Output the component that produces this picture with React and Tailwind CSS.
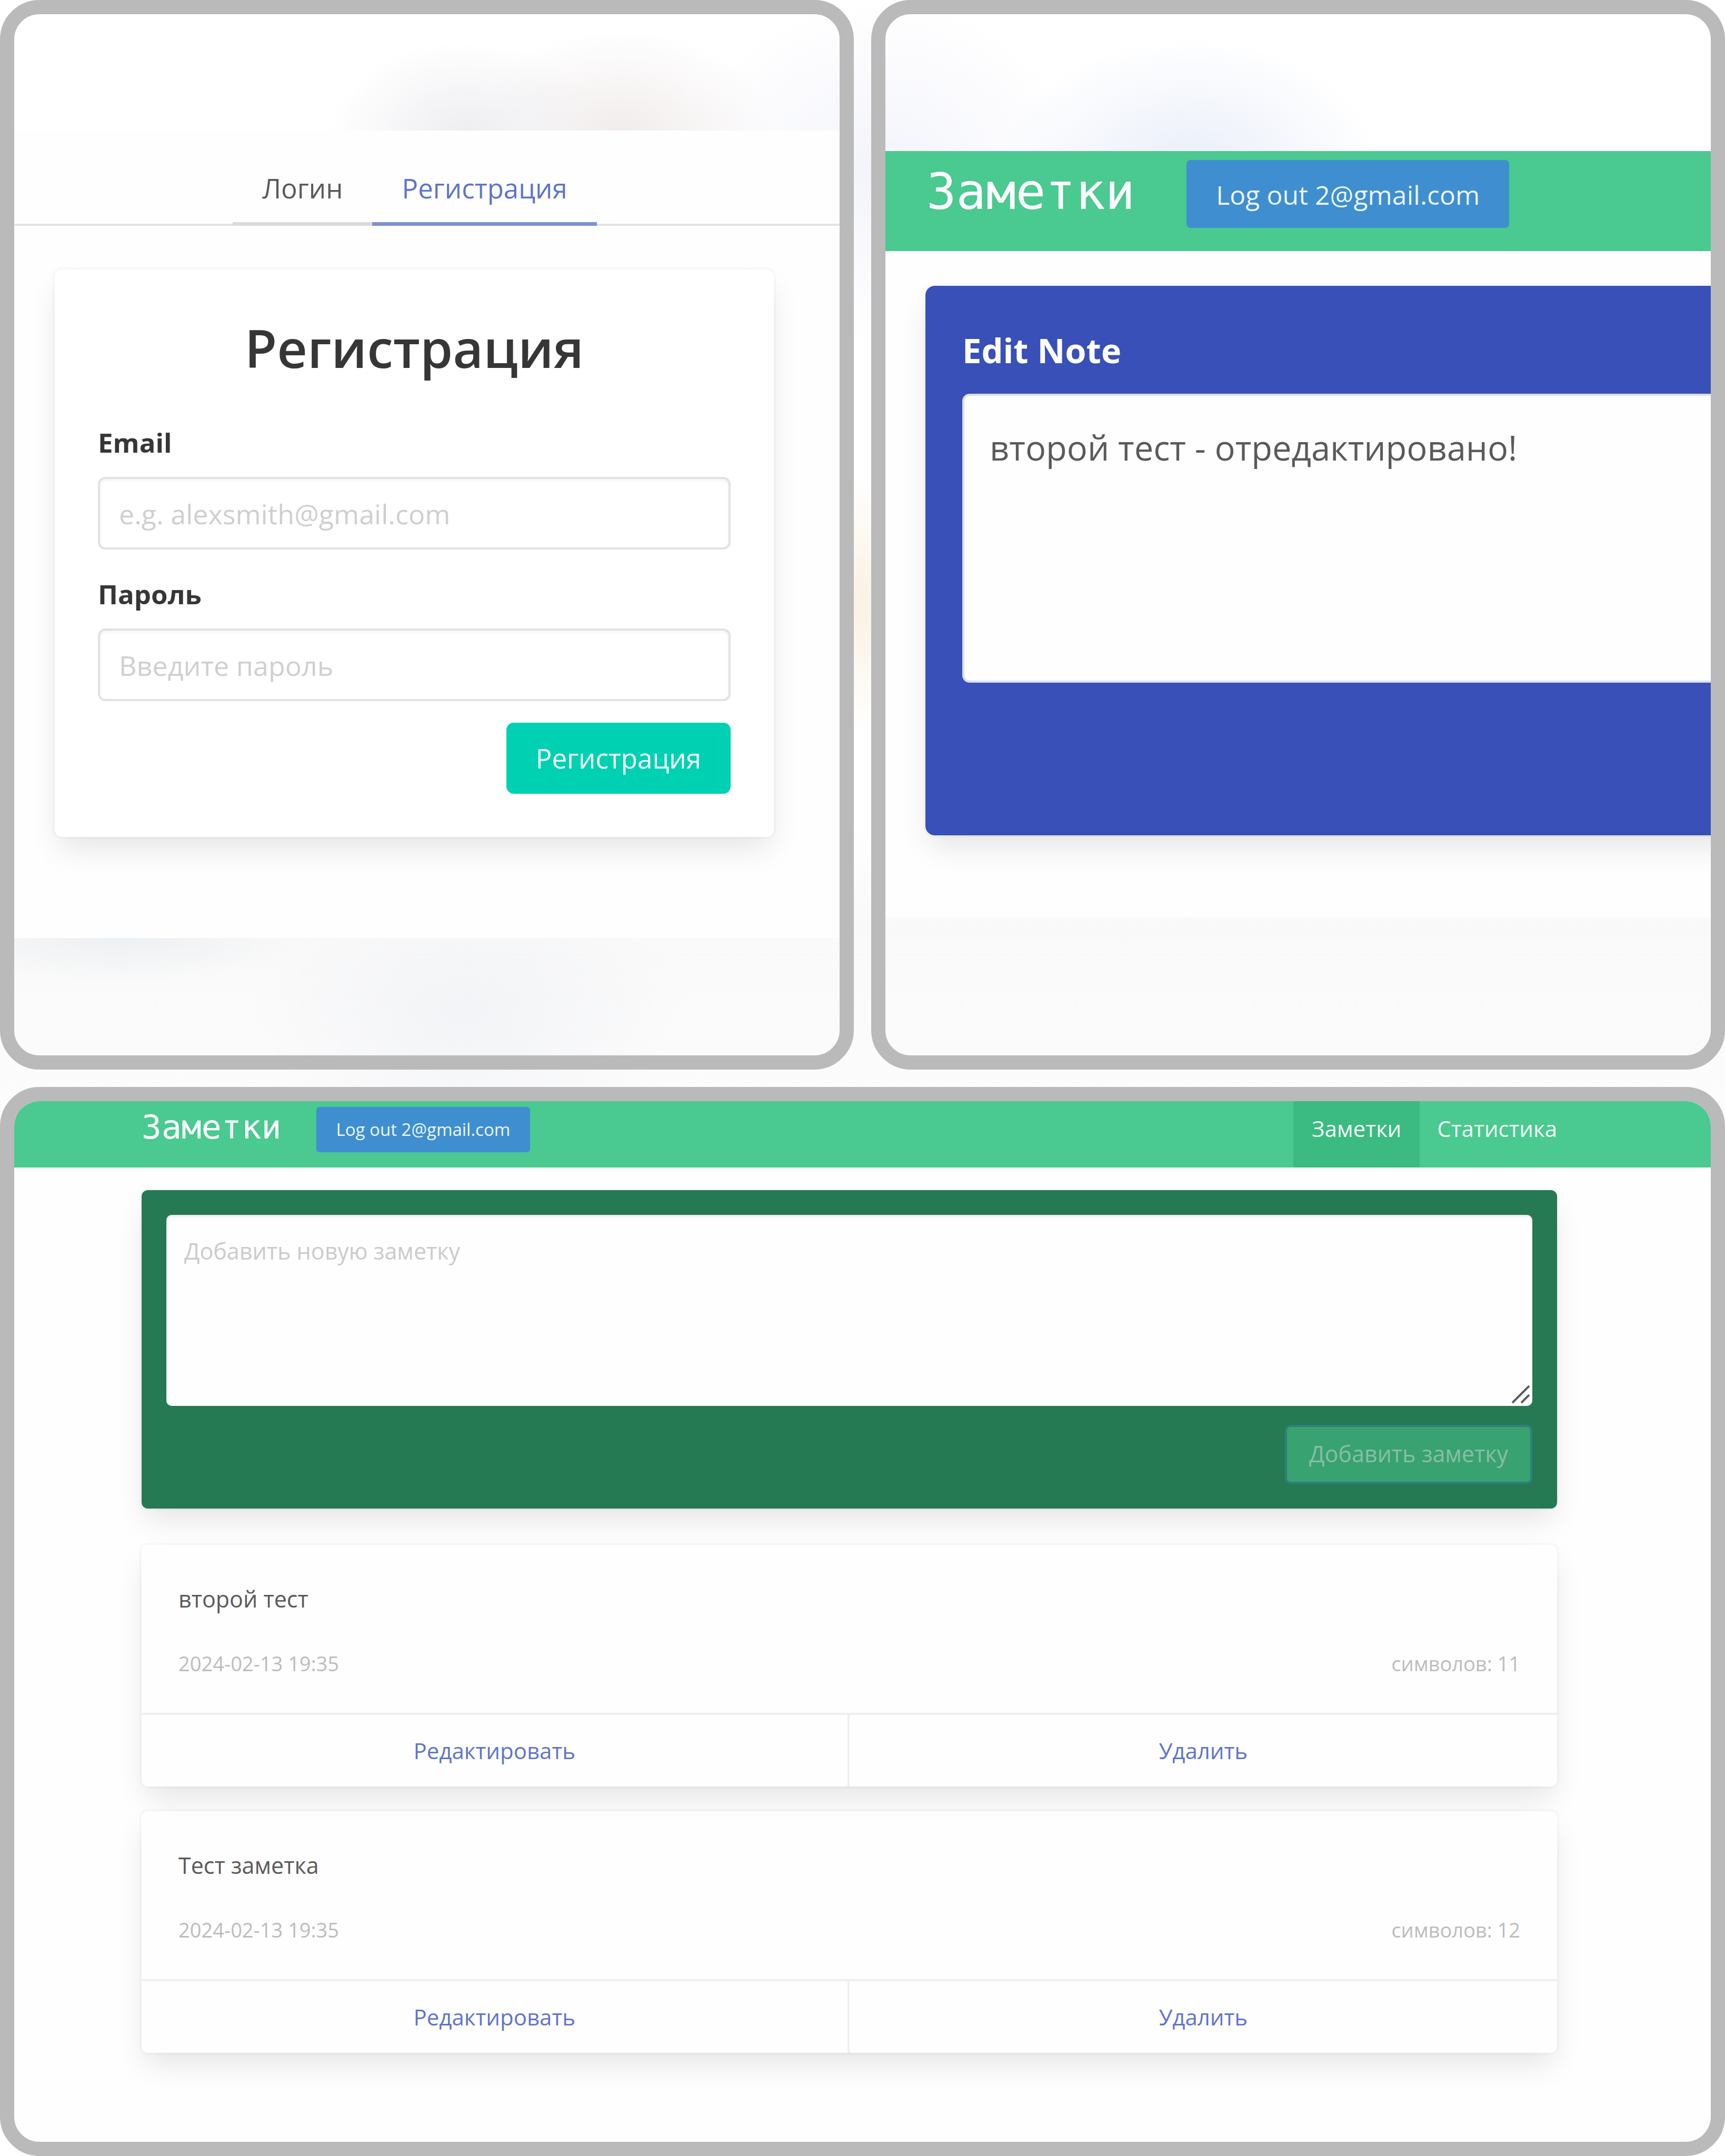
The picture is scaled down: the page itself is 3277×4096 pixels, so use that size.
const notes = [
  { id: 1, text: "второй тест", date: "2024-02-13 19:35", count: 11 },
  { id: 2, text: "Тест заметка", date: "2024-02-13 19:35", count: 12 },
];

const elevated =
  "shadow-[0_28px_56px_-7px_rgba(10,10,10,0.1),0_0_0_4px_rgba(10,10,10,0.02)]";

function Frame({ className, children }) {
  return (
    <div
      className={`flex min-w-0 flex-col overflow-hidden rounded-[75px] border-[27px] border-[#bababa] ${className}`}
    >
      {children}
    </div>
  );
}

function Field({ id, label, type, placeholder }) {
  return (
    <div className="flex flex-col">
      <label htmlFor={id} className="text-[51px] leading-[68px] font-bold text-[#363636]">
        {label}
      </label>
      <input
        id={id}
        type={type}
        placeholder={placeholder}
        className="mt-8 h-[138px] w-full rounded-[14px] border-4 border-[#e2e2e2] bg-white px-9 text-[52px] text-[#363636] shadow-[inset_0_3px_6px_rgba(10,10,10,0.05)] placeholder:text-[#cfcfcf]"
      />
    </div>
  );
}

function RegisterPanel() {
  return (
    <Frame className="pt-[221px]">
      <div className="flex grow flex-col bg-[#fefefe] pb-[188px]">
        <nav className="flex justify-center border-b-4 border-[#e4e4e4] pt-[68px] pr-[46px]">
          <a
            href="#login"
            className="-mb-1 border-b-[7px] border-[#dbdbdb] px-14 pb-6 text-[51px] leading-[82px] text-[#5a5a5a]"
          >
            Логин
          </a>
          <a
            href="#register"
            className="-mb-1 border-b-[7px] border-[#7f8fd6] px-14 pb-6 text-[51px] leading-[82px] text-[#5f74cd]"
          >
            Регистрация
          </a>
        </nav>
        <form
          className={`mt-[83px] mr-[125px] ml-[77px] flex flex-col rounded-[14px] bg-white p-[82px] ${elevated}`}
        >
          <h1 className="text-center text-[100px] leading-[132px] font-semibold text-[#363636]">
            Регистрация
          </h1>
          <div className="mt-20 flex flex-col gap-[50px]">
            <Field id="email" label="Email" type="email" placeholder="e.g. alexsmith@gmail.com" />
            <Field id="password" label="Пароль" type="password" placeholder="Введите пароль" />
          </div>
          <button
            type="button"
            className="mt-[41px] h-[135px] self-end rounded-[14px] bg-[#00d1b2] px-14 text-[51px] text-[#f2fffc]"
          >
            Регистрация
          </button>
        </form>
      </div>
      <div className="h-[223px] shrink-0" />
    </Frame>
  );
}

function EditPanel() {
  return (
    <Frame className="pt-[260px]">
      <div className="flex grow flex-col overflow-hidden bg-[#fefefe]">
        <header className="flex h-[190px] items-start gap-[98px] bg-[#4ac990] pt-[17px] pl-[78px]">
          <span className="font-['DejaVu_Sans_Mono',monospace] text-[94px] leading-[122px] text-white">
            Заметки
          </span>
          <button
            type="button"
            className="h-[129px] rounded-[8px] bg-[#3f8fd0] px-14 pt-1 text-[50px] whitespace-nowrap text-[#edf5fb]"
          >
            Log out 2@gmail.com
          </button>
        </header>
        <div
          className={`mt-[66px] -mr-20 ml-[76px] flex grow flex-col rounded-[18px] bg-[#3850b7] pt-[78px] pb-[290px] pl-[70px] ${elevated}`}
        >
          <label htmlFor="edit" className="text-[65px] leading-[88px] font-bold text-white">
            Edit Note
          </label>
          <textarea
            id="edit"
            defaultValue="второй тест - отредактировано!"
            className="mt-[39px] w-full grow resize-none rounded-[14px] border-4 border-[#dcdfef] bg-[#fefefe] px-[48px] py-[48px] text-[65px] leading-[100px] text-[#5a5a5a]"
          />
        </div>
        <div className="h-[156px] shrink-0" />
      </div>
      <div className="h-[262px] shrink-0" />
    </Frame>
  );
}

function NoteCard({ note }) {
  return (
    <article className={`flex flex-col rounded-[12px] bg-[#fefefe] ${elevated}`}>
      <div className="px-[70px] pt-[69px] pb-[60px]">
        <p className="text-[43px] leading-[68px] text-[#5a5a5a]">{note.text}</p>
        <div className="mt-[54px] flex justify-between text-[38px] leading-[68px] text-[#bcbcbc]">
          <time>{note.date}</time>
          <span>символов: {note.count}</span>
        </div>
      </div>
      <footer className="grid grid-cols-2 border-t-4 border-[#efefef] text-center text-[42px] leading-[136px] text-[#5f74cd]">
        <a href="#edit" className="border-r-4 border-[#efefef]">
          Редактировать
        </a>
        <a href="#delete">Удалить</a>
      </footer>
    </article>
  );
}

function NotesPanel() {
  return (
    <Frame className="col-span-2 bg-[#fefefe]">
      <header className="flex h-[126px] shrink-0 items-start bg-[#4ac990] pr-[259px] pl-[242px]">
        <span className="pt-[10px] font-['DejaVu_Sans_Mono',monospace] text-[63px] leading-[80px] text-white">
          Заметки
        </span>
        <button
          type="button"
          className="mt-[11px] ml-[66px] h-[86px] rounded-[6px] bg-[#3f8fd0] px-[38px] text-[33px] whitespace-nowrap text-[#edf5fb]"
        >
          Log out 2@gmail.com
        </button>
        <nav className="ml-auto flex self-stretch text-[42px] leading-[104px] text-[#f2fbf7]">
          <a href="#notes" className="bg-[#3bba82] px-[35px]">
            Заметки
          </a>
          <a href="#stats" className="px-[33px]">
            Статистика
          </a>
        </nav>
      </header>
      <main className="mt-[43px] mr-[292px] ml-[242px] flex flex-col">
        <section className={`flex flex-col rounded-[12px] bg-[#257953] p-[47px] ${elevated}`}>
          <div className="relative flex">
            <textarea
              aria-label="Добавить новую заметку"
              placeholder="Добавить новую заметку"
              className="h-[363px] w-full resize-none rounded-[10px] bg-[#fefefe] px-[34px] py-[35px] text-[43px] leading-[68px] text-[#5a5a5a] shadow-[inset_0_2px_5px_rgba(10,10,10,0.12)] placeholder:text-[#cbcbcb]"
            />
            <svg
              viewBox="0 0 36 36"
              className="pointer-events-none absolute right-1 bottom-1 size-9"
              fill="none"
              stroke="#5c5c5c"
              strokeWidth="4"
            >
              <path d="M2 34 34 2M19 34 34 19" />
            </svg>
          </div>
          <button
            type="button"
            disabled
            className="mt-9 h-[112px] self-end rounded-[10px] border-4 border-[#2f7f7c] bg-[#38a271] px-[42px] text-[43px] text-[#87bfa3]"
          >
            Добавить заметку
          </button>
        </section>
        <div className="mt-[69px] flex flex-col gap-[47px]">
          {notes.map((note) => (
            <NoteCard key={note.id} note={note} />
          ))}
        </div>
      </main>
    </Frame>
  );
}

export default function App() {
  return (
    <div className="grid min-h-screen grid-cols-2 grid-rows-2 gap-[33px] bg-white bg-[radial-gradient(8%_4.5%_at_27%_6.4%,#ededf1,transparent),radial-gradient(9%_5%_at_36%_6.4%,#f1ebeb,transparent),radial-gradient(11%_6%_at_69%_7.8%,#e9eef9,transparent),radial-gradient(12%_8%_at_51%_8%,#f3f4fb,transparent),radial-gradient(3%_6%_at_50%_28%,#fbf1e4,transparent),radial-gradient(11%_2.4%_at_7%_43.2%,#eceff2,transparent),radial-gradient(13%_7%_at_27%_47%,#f3f4f7,transparent),linear-gradient(#fff_38%,#f9f9f9_43%,#fcfcfc_51%,#fff_54%)] font-['Open_Sans',sans-serif]">
      <RegisterPanel />
      <EditPanel />
      <NotesPanel />
    </div>
  );
}
